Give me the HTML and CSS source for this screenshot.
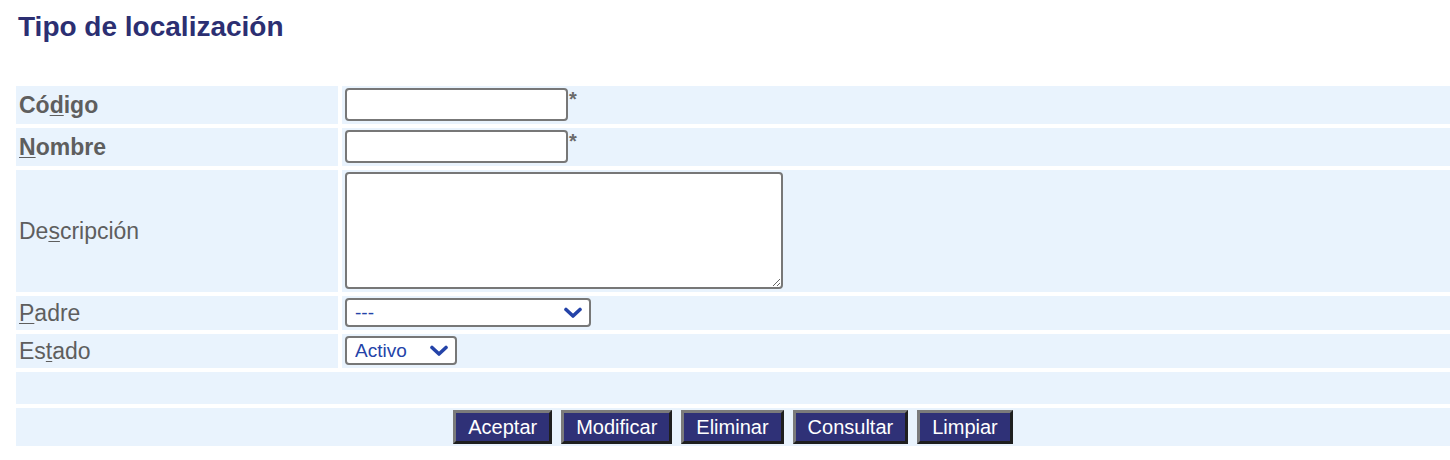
FILE: index.html
```html
<!DOCTYPE html>
<html lang="es">
<head>
<meta charset="utf-8">
<title>Tipo de localización</title>
<link rel="stylesheet" href="styles.css">
</head>
<body>
<h1 class="title">Tipo de localización</h1>
<table class="form">
  <tr>
    <td class="label bold">Có<u>d</u>igo</td>
    <td class="value"><div class="field"><input class="text" type="text"><span class="req">*</span></div></td>
  </tr>
  <tr>
    <td class="label bold"><u>N</u>ombre</td>
    <td class="value"><div class="field"><input class="text" type="text"><span class="req">*</span></div></td>
  </tr>
  <tr>
    <td class="label">De<u>s</u>cripción</td>
    <td class="value"><div class="field"><textarea class="area"></textarea></div></td>
  </tr>
  <tr>
    <td class="label"><u>P</u>adre</td>
    <td class="value"><div class="field"><select class="sel sel-wide"><option>---</option></select></div></td>
  </tr>
  <tr>
    <td class="label">Es<u>t</u>ado</td>
    <td class="value"><div class="field"><select class="sel sel-narrow"><option>Activo</option></select></div></td>
  </tr>
  <tr>
    <td class="spacer" colspan="2"><div class="spacer-box"></div></td>
  </tr>
  <tr>
    <td class="actions" colspan="2">
      <div class="buttons">
        <button class="btn" type="button">Aceptar</button>
        <button class="btn" type="button">Modificar</button>
        <button class="btn" type="button">Eliminar</button>
        <button class="btn" type="button">Consultar</button>
        <button class="btn" type="button">Limpiar</button>
      </div>
    </td>
  </tr>
</table>
</body>
</html>
```

FILE: styles.css
```css
html, body {
  margin: 0;
  padding: 0;
  overflow: hidden;
  background: #ffffff;
}

body {
  font-family: "Liberation Sans", Arial, sans-serif;
}

.title {
  margin: 0;
  padding: 10px 0 0 18px;
  height: 33px;
  line-height: 33px;
  font-size: 28px;
  font-weight: bold;
  color: #2c2f72;
}

.form {
  margin: 39px 0 0 12px;
  width: 1442px;
  border-collapse: separate;
  border-spacing: 4px;
}

.form td {
  background: #e9f3fd;
  padding: 0;
}

.label {
  width: 319px;
  padding: 0 0 0 3px !important;
  vertical-align: middle;
  font-size: 23px;
  color: #5e5e5e;
  line-height: 26px;
}

.label.bold {
  font-weight: bold;
}

.label u {
  text-decoration-thickness: 1px;
  text-underline-offset: 2px;
}

.value {
  vertical-align: top;
  padding: 2px 3px 3px 3px !important;
}

.field {
  display: flex;
  align-items: flex-start;
}

.text {
  box-sizing: border-box;
  width: 223px;
  height: 33px;
  margin: 0;
  border: 2px solid #777777;
  border-radius: 4px;
  background: #ffffff;
  padding: 0 4px;
  font: 18px "Liberation Sans", Arial, sans-serif;
}

.req {
  font-size: 20px;
  font-weight: bold;
  color: #6a6a6a;
  line-height: 20px;
  margin-left: 1px;
  margin-top: 1px;
}

.area {
  box-sizing: border-box;
  width: 438px;
  height: 117px;
  margin: 0;
  border: 2px solid #777777;
  border-radius: 4px;
  background: #ffffff;
  padding: 4px;
  font: 18px "Liberation Sans", Arial, sans-serif;
}

.sel {
  box-sizing: border-box;
  appearance: none;
  -webkit-appearance: none;
  height: 29px;
  margin: 0;
  border: 2px solid #777777;
  border-radius: 4px;
  background-color: #ffffff;
  background-image: url("data:image/svg+xml;utf8,<svg xmlns='http://www.w3.org/2000/svg' width='18' height='12' viewBox='0 0 18 12'><path d='M2 2.5 L9 9 L16 2.5' fill='none' stroke='%232443a8' stroke-width='3.6' stroke-linecap='round' stroke-linejoin='round'/></svg>");
  background-repeat: no-repeat;
  background-position: right 7px center;
  background-size: 18px 12px;
  padding: 0 30px 0 8px;
  font: 19px "Liberation Sans", Arial, sans-serif;
  color: #2443a8;
}

.sel-wide {
  width: 246px;
}

.sel-narrow {
  width: 112px;
}

.spacer-box {
  height: 32px;
}

.actions {
  padding: 2px 0 !important;
}

.buttons {
  display: flex;
  justify-content: center;
  gap: 9px;
}

.btn {
  box-sizing: border-box;
  height: 34px;
  margin: 0;
  padding: 0 12px;
  border-style: solid;
  border-width: 3px;
  border-color: #7b7b7b #1f1f1f #1f1f1f #7b7b7b;
  background: #2f3177;
  color: #ffffff;
  font: 20px "Liberation Sans", Arial, sans-serif;
  line-height: 26px;
}
```
